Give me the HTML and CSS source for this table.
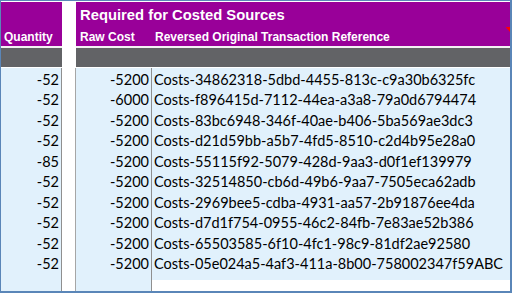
FILE: index.html
```html
<!DOCTYPE html>
<html>
<head>
<meta charset="utf-8">
<link rel="stylesheet" href="styles.css">
</head>
<body>
<div class="frame">
  <div class="sheet">
    <div class="c hd"></div>
    <div class="c gap"></div>
    <div class="c hd title span">Required for Costed Sources</div>

    <div class="c hd sub">Quantity</div>
    <div class="c gap"></div>
    <div class="c hd sub raw">Raw Cost</div>
    <div class="c hd sub ref">Reversed Original Transaction Reference<span class="flag"></span></div>

    <div class="c sep"></div>
    <div class="c sep gapsep"></div>
    <div class="c sep span"></div>

    <div class="c gray"></div>
    <div class="c gap"></div>
    <div class="c gray span"></div>

    <div class="c line"></div>
    <div class="c line"></div>
    <div class="c line span"></div>

    <div class="c d num q">-52</div><div class="c d gapd"></div><div class="c d num r">-5200</div><div class="c d txt">Costs-34862318-5dbd-4455-813c-c9a30b6325fc</div>
    <div class="c d num q">-52</div><div class="c d gapd"></div><div class="c d num r">-6000</div><div class="c d txt">Costs-f896415d-7112-44ea-a3a8-79a0d6794474</div>
    <div class="c d num q">-52</div><div class="c d gapd"></div><div class="c d num r">-5200</div><div class="c d txt">Costs-83bc6948-346f-40ae-b406-5ba569ae3dc3</div>
    <div class="c d num q">-52</div><div class="c d gapd"></div><div class="c d num r">-5200</div><div class="c d txt">Costs-d21d59bb-a5b7-4fd5-8510-c2d4b95e28a0</div>
    <div class="c d num q">-85</div><div class="c d gapd"></div><div class="c d num r">-5200</div><div class="c d txt">Costs-55115f92-5079-428d-9aa3-d0f1ef139979</div>
    <div class="c d num q">-52</div><div class="c d gapd"></div><div class="c d num r">-5200</div><div class="c d txt">Costs-32514850-cb6d-49b6-9aa7-7505eca62adb</div>
    <div class="c d num q">-52</div><div class="c d gapd"></div><div class="c d num r">-5200</div><div class="c d txt">Costs-2969bee5-cdba-4931-aa57-2b91876ee4da</div>
    <div class="c d num q">-52</div><div class="c d gapd"></div><div class="c d num r">-5200</div><div class="c d txt">Costs-d7d1f754-0955-46c2-84fb-7e83ae52b386</div>
    <div class="c d num q">-52</div><div class="c d gapd"></div><div class="c d num r">-5200</div><div class="c d txt">Costs-65503585-6f10-4fc1-98c9-81df2ae92580</div>
    <div class="c d num q">-52</div><div class="c d gapd"></div><div class="c d num r">-5200</div><div class="c d txt">Costs-05e024a5-4af3-411a-8b00-758002347f59ABC</div>

    <div class="c tail q"></div><div class="c tail gapd"></div><div class="c tail r"></div><div class="c tail tailref"></div>
  </div>
</div>
</body>
</html>
```
FILE: styles.css
```css
html, body {
  margin: 0;
  padding: 0;
  background: #ffffff;
}
.frame {
  width: 512px;
  height: 293px;
  box-sizing: border-box;
  border-top: 1px solid #5a86b8;
  border-left: 1px solid #5a86b8;
  border-right: 2px solid #5a86b8;
  border-bottom: 2px solid #5a86b8;
  padding-top: 1px;
  overflow: hidden;
  background: #ffffff;
}
.sheet {
  display: grid;
  grid-template-columns: 61px 14px 76px 1fr;
  grid-template-rows: 25px 19px 2px 19px 1px repeat(10, 20.45px) 30px;
}
.c {
  box-sizing: border-box;
  min-width: 0;
  white-space: nowrap;
  overflow: hidden;
}
.span {
  grid-column: span 2;
}
.hd {
  background: #990099;
  color: #ffffff;
  font-family: "Liberation Sans", Arial, sans-serif;
  font-weight: bold;
}
.title {
  font-size: 14.8px;
  padding-left: 4px;
  padding-top: 4px;
  line-height: 18px;
}
.sub {
  font-size: 12px;
  line-height: 14px;
  padding-top: 3px;
  padding-left: 3px;
}
.raw {
  padding-left: 4px;
}
.ref {
  position: relative;
  padding-left: 3px;
}
.flag {
  position: absolute;
  top: -3px;
  right: 0;
  width: 0;
  height: 0;
  border-top: 8px solid #ff0000;
  border-left: 7px solid transparent;
}
.gap {
  background: #ffffff;
}
.sep {
  background: #f2f2f2;
}
.gapsep {
  background: #ffffff;
}
.gray {
  background: #626366;
}
.line {
  background: #ffffff;
}
.d {
  background: #e1f1fc;
  font-family: Lato, "Liberation Sans", sans-serif;
  font-size: 14.5px;
  color: #000000;
  line-height: 20px;
  padding-top: 2px;
}
.q, .r {
  border-right: 1px solid #8f8f8f;
}
.gapd {
  background: #ffffff;
  border-right: 1px solid #a6a6a6;
}
.num {
  text-align: right;
  padding-right: 2px;
}
.txt {
  padding-left: 2px;
}
.tail.q, .tail.r {
  background: #e1f1fc;
}
.tailref {
  background: linear-gradient(#e1f1fc 0 8px, #ffffff 8px);
}
```
